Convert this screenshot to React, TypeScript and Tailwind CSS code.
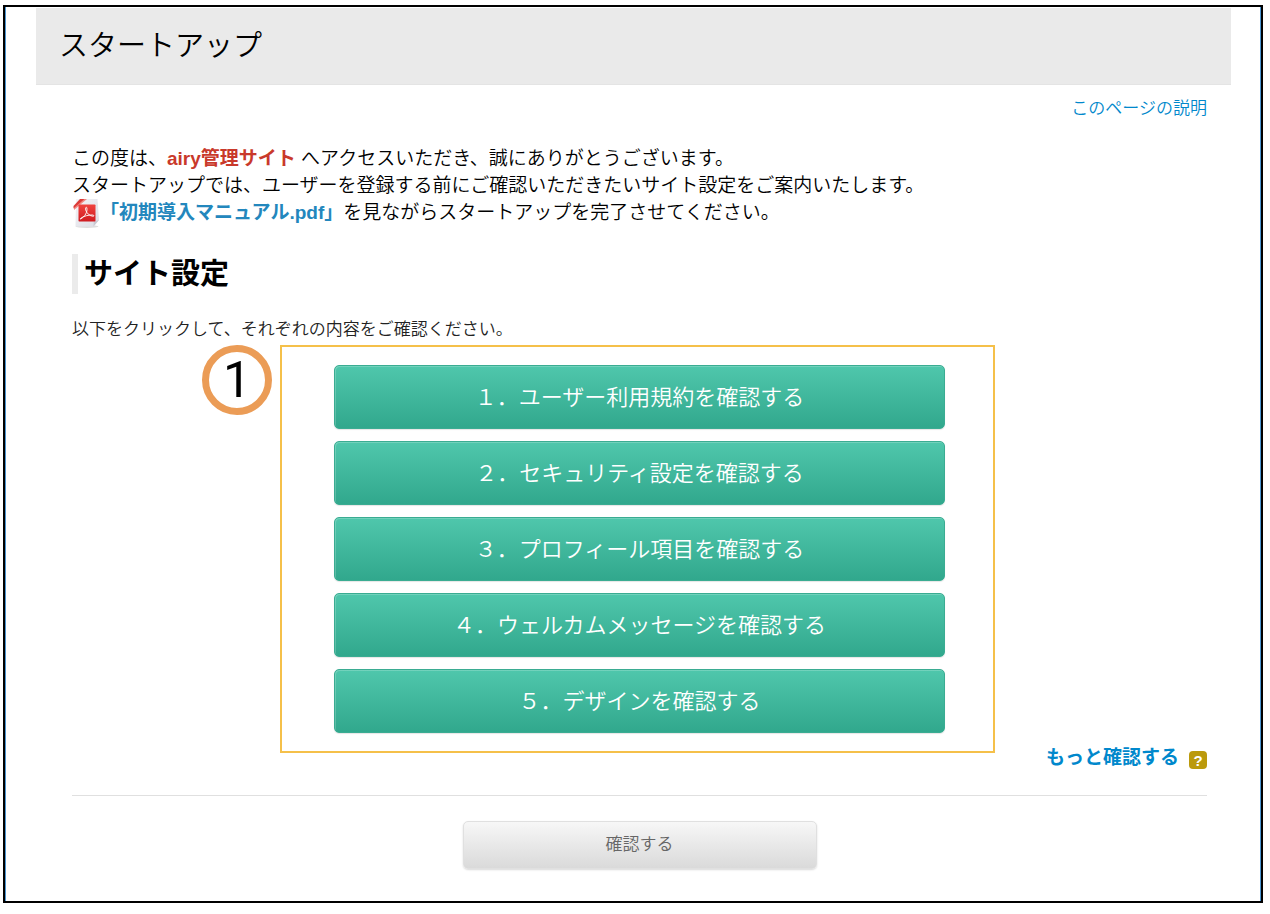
const steps = [
  '\uFF11\uFF0Eユーザー利用規約を確認する',
  '\uFF12\uFF0Eセキュリティ設定を確認する',
  '\uFF13\uFF0Eプロフィール項目を確認する',
  '\uFF14\uFF0Eウェルカムメッセージを確認する',
  '\uFF15\uFF0Eデザインを確認する',
];

const PdfIcon = () => (
  <svg
    width="28"
    height="31"
    viewBox="0 0 28 31"
    className="shrink-0"
    aria-hidden="true"
  >
    <defs>
      <linearGradient id="paper" x1="0" y1="0" x2="1" y2="1">
        <stop offset="0" stopColor="#f4f4f7" />
        <stop offset="1" stopColor="#dcdce4" />
      </linearGradient>
      <linearGradient id="red" x1="0" y1="0" x2="0" y2="1">
        <stop offset="0" stopColor="#f0433f" />
        <stop offset="1" stopColor="#cf1a20" />
      </linearGradient>
    </defs>
    <ellipse cx="15" cy="28.6" rx="11.5" ry="1.4" fill="#dedede" />
    <path d="M4 1h21.500L27 22l-5.500 6.500H3.500z" fill="url(#paper)" />
    <path d="M27 22l-5.500 6.500.3-5z" fill="#c9c9d2" />
    <path d="M2 9.500L11.500 1H15L2 12z" fill="#f08a84" />
    <path d="M1.500 8l6.500-7h4.500L1.500 10.500z" fill="#dc3b38" />
    <rect x="6.500" y="6.500" width="17" height="17" rx="0.800" fill="url(#red)" />
    <path
      d="M8.500 21c4.500-2.200 7.300-7.400 6.300-11.200-.5-1.300-1.700 0-1.200 2 1.100 3.500 4 6.300 7.700 6.500 1-.1.700-1.200-.5-1.300-4-.3-8.400 1-11.300 2.700-1.200.8-1.700 1.600-1 1.300z"
      fill="none"
      stroke="#fff"
      strokeWidth="1"
      opacity="0.900"
    />
  </svg>
);

const StartupPage = () => (
  <div className="border-2 border-black">
    <main className="border-x border-[#4a94d0] bg-white pt-px pb-8">
      <header className="mr-[29px] ml-[30px] flex h-[77px] items-center border-b border-[#e4e4e4] bg-[#eaeaea] px-[23px]">
        <h1 className="text-[29px] leading-9 text-black">スタートアップ</h1>
      </header>

      <div className="mr-[53px] ml-[66px]">
        <div className="pt-3 text-right">
          <a href="#help" className="block text-[17px] leading-6 text-[#0088cc]">
            このページの説明
          </a>
        </div>

        <p className="mt-6 text-[19px] leading-[27px] text-black">
          この度は、<strong className="text-[#c9392b]">airy管理サイト</strong>{' '}
          へアクセスいただき、誠にありがとうございます。
          <br />
          スタートアップでは、ユーザーを登録する前にご確認いただきたいサイト設定をご案内いたします。
        </p>
        <p className="flex h-7 items-center text-[19px] leading-7 text-black">
          <PdfIcon />
          <a href="#manual" className="font-bold text-[#2387bd]">
            「初期導入マニュアル.pdf」
          </a>
          を見ながらスタートアップを完了させてください。
        </p>

        <h2 className="mt-[27px] border-l-[6px] border-[#ebebeb] pl-1.5 text-[29px] leading-10 font-bold text-black">
          サイト設定
        </h2>
        <p className="mt-6 text-[17px] leading-6 text-[#222]">
          以下をクリックして、それぞれの内容をご確認ください。
        </p>

        <div className="mx-auto mt-[3px] w-[719px] pr-1">
          <div className="relative border-2 border-[#f5c04a] pt-[18px] pr-12 pb-[18px] pl-[52px]">
            <span className="absolute -top-0.5 -left-20 flex size-[70px] items-center justify-center rounded-full border-7 border-[#eb9c56] bg-white font-['Roboto',sans-serif] text-[50px] leading-none font-normal text-black">
              1
            </span>
            <div className="flex flex-col gap-3">
              {steps.map((step) => (
                <button
                  key={step}
                  type="button"
                  className="h-16 rounded-[5px] border border-[#3aac92] bg-linear-to-b from-[#4fc7ac] to-[#31a88d] text-[22px] text-white shadow-[inset_1px_1px_0_rgba(255,255,255,0.2),0_1px_1px_rgba(0,0,0,0.1)]"
                >
                  {step}
                </button>
              ))}
            </div>
          </div>
        </div>

        <div className="-mt-[7px] flex items-center justify-end gap-2.5">
          <a
            href="#more"
            className="text-[19px] leading-6 font-bold text-[#0088cc]"
          >
            もっと確認する
          </a>
          <button
            type="button"
            aria-label="ヘルプ"
            className="mt-1 flex size-[18px] items-center justify-center rounded bg-[#bb9a0c] text-[15px] leading-none font-bold text-white"
          >
            ?
          </button>
        </div>

        <hr className="mt-[25px] border-[#e0e0e0]" />

        <div className="mt-[25px] flex justify-center">
          <button
            type="button"
            className="h-12 w-[354px] rounded-[5px] border border-[#e0e0e0] bg-linear-to-b from-[#f7f7f7] to-[#dadada] text-[17px] text-[#666] shadow-[0_1px_2px_rgba(0,0,0,0.15)]"
          >
            確認する
          </button>
        </div>
      </div>
    </main>
  </div>
);

export default function App() {
  return (
    <div
      lang="ja"
      className="bg-white pt-[5px] pr-[7px] pb-2.5 pl-[3px] font-['Liberation_Sans','Noto_Sans_CJK_JP',sans-serif] font-[350]"
    >
      <StartupPage />
    </div>
  );
}
